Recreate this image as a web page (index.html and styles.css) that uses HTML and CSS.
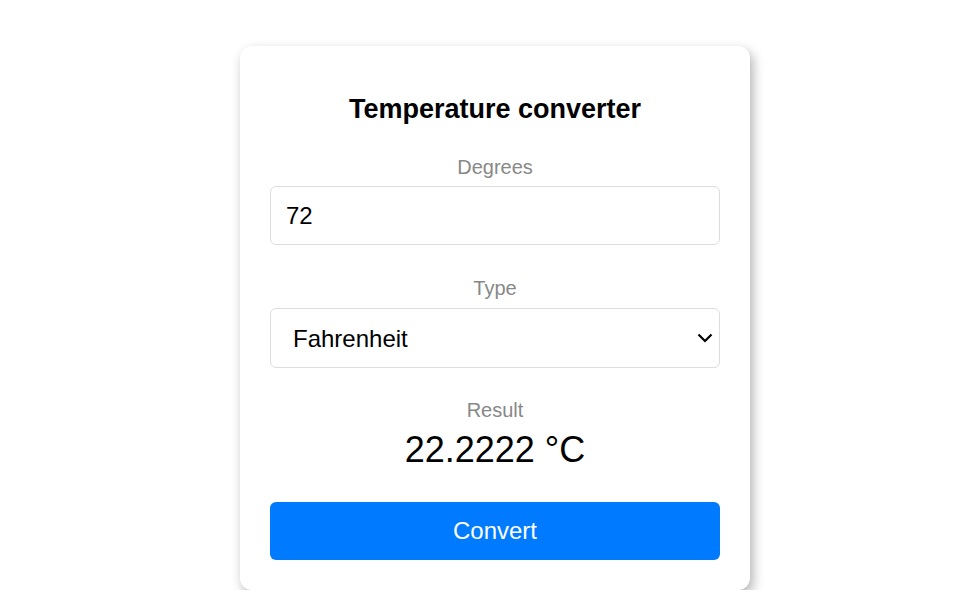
FILE: index.html
```html
<!DOCTYPE html>
<html>
<head>
<meta charset="utf-8">
<link rel="stylesheet" href="styles.css">
</head>
<body>
<div class="page">
  <div class="card">
    <h2 class="title">Temperature converter</h2>
    <div class="field">
      <label class="label" for="deg">Degrees</label>
      <input class="control input" id="deg" type="text" value="72">
    </div>
    <div class="field field-type">
      <label class="label" for="type">Type</label>
      <div class="select-wrap">
        <select class="control select" id="type">
          <option>Fahrenheit</option>
          <option>Celsius</option>
        </select>
        <svg class="chevron" width="16" height="10" viewBox="0 0 16 10" aria-hidden="true">
          <path d="M1.5 1.5 L8 8 L14.5 1.5" fill="none" stroke="#000" stroke-width="2.2"/>
        </svg>
      </div>
    </div>
    <div class="field result">
      <div class="label">Result</div>
      <div class="value">22.2222 °C</div>
    </div>
    <button class="btn">Convert</button>
  </div>
</div>
</body>
</html>
```

FILE: styles.css
```css
html, body {
  margin: 0;
  padding: 0;
  background: #ffffff;
  font-family: "Liberation Sans", Arial, sans-serif;
}
.page {
  display: flex;
  justify-content: center;
  padding-top: 46px;
  padding-left: 24px;
}
.card {
  width: 450px;
  padding: 30px 30px 30px 30px;
  background: #fff;
  border-radius: 12px;
  box-shadow: 3px 5px 12px rgba(0, 0, 0, 0.3);
  display: flex;
  flex-direction: column;
}
.title {
  margin: 17px 0 0 0;
  font-size: 27px;
  line-height: 32px;
  font-weight: bold;
  text-align: center;
  color: #000;
}
.field {
  display: flex;
  flex-direction: column;
  margin-top: 30px;
}
.label {
  display: block;
  text-align: center;
  color: #888;
  font-size: 20px;
  line-height: 24px;
  margin-bottom: 7px;
}
.field-type {
  margin-top: 31px;
}
.field-type .label {
  margin-bottom: 8px;
}
.control {
  box-sizing: border-box;
  width: 100%;
  height: 60px;
  border: 1px solid #ddd;
  border-radius: 6px;
  font-family: "Liberation Sans", Arial, sans-serif;
  font-size: 24px;
  color: #000;
  background: #fff;
  padding: 0 15px;
  outline: none;
}
.input {
  height: 59px;
}
.select-wrap {
  position: relative;
}
.select {
  -webkit-appearance: none;
  appearance: none;
  padding-left: 22px;
  padding-right: 40px;
}
.chevron {
  position: absolute;
  right: 7px;
  top: 25px;
  pointer-events: none;
}
.result {
  margin-top: 30px;
}
.result .label {
  margin-bottom: 8px;
}
.value {
  text-align: center;
  font-size: 36px;
  line-height: 40px;
  color: #000;
}
.btn {
  margin-top: 32px;
  height: 58px;
  border: none;
  border-radius: 6px;
  background: #007bff;
  color: #fff;
  font-family: "Liberation Sans", Arial, sans-serif;
  font-size: 24px;
  cursor: pointer;
}
```
